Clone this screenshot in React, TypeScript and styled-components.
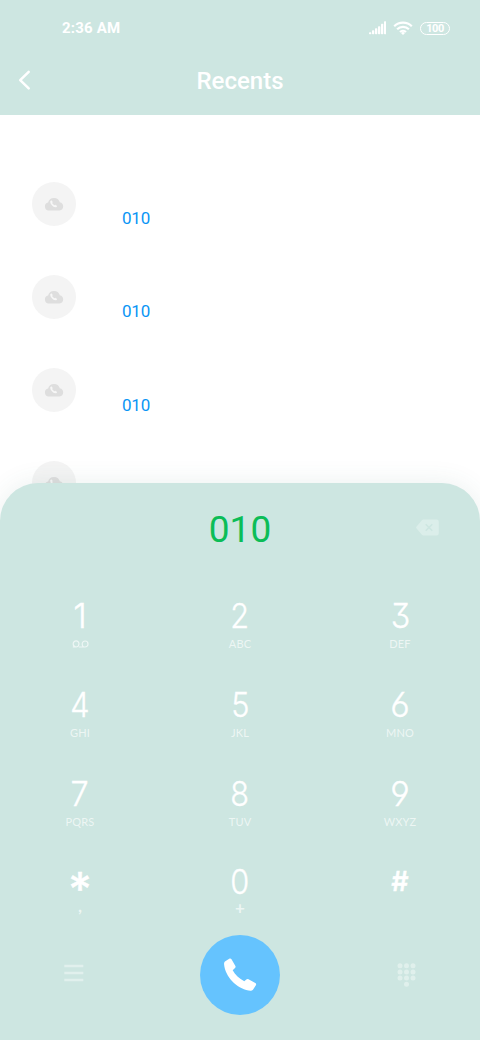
import React from 'react';
import styled, { createGlobalStyle } from 'styled-components';

const GlobalStyle = createGlobalStyle`
  * { box-sizing: border-box; }
  body { margin: 0; background: #fff; font-family: Roboto, "Liberation Sans", sans-serif; }
  button { border: 0; padding: 0; background: none; font: inherit; color: inherit; }
`;

const Screen = styled.div`
  width: 480px;
  height: 1040px;
  overflow: hidden;
  display: flex;
  flex-direction: column;
  background: #fff;
`;

const Header = styled.header`
  flex: none;
  height: 115.4px;
  background: #cde6e1;
  color: #fff;
`;

const StatusBar = styled.div`
  height: 56px;
  padding: 0 30px 0 62px;
  display: flex;
  align-items: center;
  justify-content: space-between;
`;

const Clock = styled.span`
  font-size: 15px;
  line-height: 18px;
  font-weight: 700;
  letter-spacing: 0.2px;
`;

const StatusIcons = styled.div`
  display: flex;
  align-items: center;
  gap: 7px;
  svg { display: block; }
`;

const Battery = styled.span`
  width: 30px;
  height: 13px;
  border: 1.3px solid #fff;
  border-radius: 7px;
  font-size: 11px;
  line-height: 11px;
  font-weight: 700;
  letter-spacing: -0.5px;
  text-align: center;
`;

const TitleBar = styled.div`
  height: 50px;
  display: grid;
  grid-template-columns: 60px 1fr 60px;
  align-items: center;
`;

const BackButton = styled.button`
  height: 48px;
  padding-left: 16px;
  display: flex;
  align-items: center;
`;

const Title = styled.h1`
  margin: 0;
  font-size: 24px;
  line-height: 28px;
  font-weight: 500;
  text-align: center;
`;

const CallList = styled.ul`
  flex: none;
  height: 367.6px;
  margin: 0;
  padding: 66.2px 32px 0;
  list-style: none;
`;

const CallRow = styled.li`
  height: 93.3px;
  display: flex;
  gap: 46px;
`;

const Avatar = styled.span`
  width: 44px;
  height: 44px;
  border-radius: 50%;
  background: #f4f4f4;
  display: flex;
  align-items: center;
  justify-content: center;
`;

const CallNumber = styled.span`
  padding-top: 26.4px;
  font-size: 17px;
  line-height: 20px;
  letter-spacing: -0.2px;
  color: #0a95f5;
`;

const Dialer = styled.section`
  flex: none;
  position: relative;
  height: 557px;
  border-radius: 38px 38px 0 0;
  background: #cde6e1;
  box-shadow: 0 0 26px rgba(60, 110, 95, 0.1);
`;

const Display = styled.div`
  height: 92px;
  padding-right: 41px;
  display: grid;
  grid-template-columns: 140px 1fr 99px;
  align-items: center;
`;

const Dialed = styled.output`
  grid-column: 2;
  text-align: center;
  font-size: 37px;
  line-height: 44px;
  padding-top: 2px;
  color: #0bbd57;
`;

const DeleteButton = styled.button`
  display: flex;
  justify-content: flex-end;
  padding-bottom: 3px;
`;

const Keypad = styled.div`
  height: 356px;
  padding-top: 20px;
  display: grid;
  grid-template-columns: repeat(3, 160px);
  grid-auto-rows: 88.8px;
`;

const Key = styled.button`
  display: flex;
  flex-direction: column;
  align-items: center;
  color: #fff;
`;

const Digit = styled.span<{ $stretch?: number }>`
  height: 41.5px;
  font-family: Inter, sans-serif;
  font-size: 34.5px;
  line-height: 41.5px;
  font-weight: 300;
  -webkit-text-stroke: 0.35px #fff;
  font-feature-settings: "cv03", "cv04", "cv09";
  transform: scaleX(${(p) => p.$stretch ?? 0.89});
`;

const Symbol = styled(Digit)<{ $size: number; $drop: number; $weight: number }>`
  font-size: ${(p) => p.$size}px;
  font-weight: ${(p) => p.$weight};
  padding-top: ${(p) => p.$drop}px;
  transform: none;
`;

const Letters = styled.span<{ $lift?: number }>`
  height: 16px;
  margin-top: ${(p) => -(p.$lift ?? 0)}px;
  display: flex;
  align-items: center;
  font-family: Lato, sans-serif;
  font-size: ${(p) => (p.$lift ? 17 : 11)}px;
  font-weight: ${(p) => (p.$lift ? 700 : 400)};
  line-height: 16px;
  letter-spacing: 0.15px;
  color: rgba(255, 255, 255, 0.66);
`;

const Actions = styled.div`
  height: 88px;
  display: grid;
  grid-template-columns: 147px 186px 147px;
  align-items: center;
  justify-items: center;
`;

const MenuIcon = styled.svg`
  margin-bottom: 4px;
`;

const CallButton = styled.button`
  width: 80px;
  height: 80px;
  border-radius: 50%;
  background: #65c3fe;
  display: flex;
  align-items: center;
  justify-content: center;
`;

const handset =
  'M1.3 3.2 5.2.8C6.1.2 7 .4 7.5 1.3L11.4 8c.4.8.2 1.5-.4 2.1L8.7 12.2C11 16.5 15.3 20.6 20.3 23.2L22.3 21.6c.7-.6 1.4-.7 2.2-.3L31.3 25c.9.5 1.1 1.4.6 2.2L29.3 31.2C28.4 32.6 26.6 32.9 24.5 32.6 12.6 30.5 1.2 18.6.1 6.6 0 5.1.1 4 1.3 3.2z';

const SignalIcon = () => (
  <svg width="17" height="14" viewBox="0 0 17 14" fill="#fff">
    {[2, 4, 6, 8, 10.5, 13].map((h, i) => (
      <rect key={h} x={i * 3} y={13.3 - h} width="2.3" height={h} rx="0.7" />
    ))}
  </svg>
);

const WifiIcon = () => (
  <svg width="20" height="14" viewBox="0 0 20 14" fill="none" stroke="#fff" strokeWidth="2.2">
    <path d="M1.2 5.2a12.5 12.5 0 0 1 17.6 0M4.1 8.2a8.4 8.4 0 0 1 11.8 0M7 11a4.3 4.3 0 0 1 6 0" />
    <path d="M8 12 10 14l2-2a2.9 2.9 0 0 0-4 0z" fill="#fff" stroke="none" />
  </svg>
);

const CloudCallIcon = () => (
  <svg width="20" height="14" viewBox="0 0 20 14">
    <path
      d="M4.6 13.4A4 4 0 0 1 4.1 5.5 6.1 6.1 0 0 1 15.8 5.2a4.15 4.15 0 0 1-.3 8.2z"
      fill="#dedede"
    />
    <path d={handset} fill="#f7f7f7" transform="translate(6.2 3.3) scale(.215)" />
  </svg>
);

const VoicemailIcon = () => (
  <svg width="17" height="10" viewBox="0 0 17 10" fill="none" stroke="#fff" strokeOpacity=".66" strokeWidth="1.2">
    <path d="M.8 8h3.3c1.6 0 2.9-1.5 2.9-3.2a2.9 2.9 0 1 0-5.8 0C1.2 6.4 2.4 8 4.1 8M6.8 8H13a3 3 0 0 0 3-3.1 2.9 2.9 0 1 0-5.8 0c0 1.3.5 2.3 1.3 3.1" />
  </svg>
);

const DeleteIcon = () => (
  <svg width="23" height="17" viewBox="0 0 23 17">
    <path d="M7.4.5H20.5A2.3 2.3 0 0 1 22.8 2.8V14.2a2.3 2.3 0 0 1-2.3 2.3H7.4a2 2 0 0 1-1.5-.7L.6 9.6a1.7 1.7 0 0 1 0-2.2L5.9 1.2A2 2 0 0 1 7.4.5z" fill="#dbeeea" />
    <path d="m9.7 5.2 6.6 6.6m0-6.6-6.6 6.6" stroke="#cde6e1" strokeWidth="1.6" />
  </svg>
);

type KeyData = { digit: string; letters?: string; stretch?: number; lift?: number };

const keys: KeyData[] = [
  { digit: '1', stretch: 1 },
  { digit: '2', letters: 'ABC' },
  { digit: '3', letters: 'DEF', stretch: 0.93 },
  { digit: '4', letters: 'GHI' },
  { digit: '5', letters: 'JKL' },
  { digit: '6', letters: 'MNO', stretch: 0.98 },
  { digit: '7', letters: 'PQRS', stretch: 0.94 },
  { digit: '8', letters: 'TUV' },
  { digit: '9', letters: 'WXYZ', stretch: 0.98 },
  { digit: '*', letters: ',', lift: 5 },
  { digit: '0', letters: '+', lift: 2.5 },
  { digit: '#' },
];

const KeyFace = ({ digit, stretch }: KeyData) => {
  if (digit === '*') return <Symbol $size={46} $drop={8} $weight={500}>*</Symbol>;
  if (digit === '#') return <Symbol $size={27} $drop={0} $weight={600}>#</Symbol>;
  return <Digit $stretch={stretch}>{digit}</Digit>;
};

export default function App() {
  return (
    <>
      <GlobalStyle />
      <Screen>
        <Header>
          <StatusBar>
            <Clock>2:36 AM</Clock>
            <StatusIcons>
              <SignalIcon />
              <WifiIcon />
              <Battery>100</Battery>
            </StatusIcons>
          </StatusBar>
          <TitleBar>
            <BackButton aria-label="Back">
              <svg width="16" height="22" viewBox="0 0 16 22" fill="none" stroke="#fff" strokeWidth="2.5" strokeLinecap="round" strokeLinejoin="round">
                <path d="M12.7 1.8 4.2 10.1l8.5 8.3" />
              </svg>
            </BackButton>
            <Title>Recents</Title>
          </TitleBar>
        </Header>
        <CallList>
          {[0, 1, 2, 3].map((id) => (
            <CallRow key={id}>
              <Avatar><CloudCallIcon /></Avatar>
              {id < 3 && <CallNumber>010</CallNumber>}
            </CallRow>
          ))}
        </CallList>
        <Dialer>
          <Display>
            <Dialed>010</Dialed>
            <DeleteButton aria-label="Delete"><DeleteIcon /></DeleteButton>
          </Display>
          <Keypad>
            {keys.map((key) => (
              <Key key={key.digit}>
                <KeyFace {...key} />
                <Letters $lift={key.lift}>
                  {key.digit === '1' ? <VoicemailIcon /> : key.letters}
                </Letters>
              </Key>
            ))}
          </Keypad>
          <Actions>
            <MenuIcon width="20" height="18" viewBox="0 0 20 18" stroke="#e1f0ed" strokeWidth="2.6">
              <path d="M.3 2h19M.3 9h19M.3 16h19" />
            </MenuIcon>
            <CallButton aria-label="Call">
              <svg width="33" height="33" viewBox="0 0 33 33" fill="#fff">
                <path d={handset} />
              </svg>
            </CallButton>
            <svg width="20" height="24" viewBox="0 0 20 24" fill="#e0f0ec">
              {[0, 1, 2].flatMap((row) =>
                [0, 1, 2].map((col) => (
                  <circle key={`${row}${col}`} cx={3 + col * 6.5} cy={2.7 + row * 6.2} r="2.5" />
                )),
              )}
              <circle cx="9.5" cy="21.3" r="2.5" />
            </svg>
          </Actions>
        </Dialer>
      </Screen>
    </>
  );
}
